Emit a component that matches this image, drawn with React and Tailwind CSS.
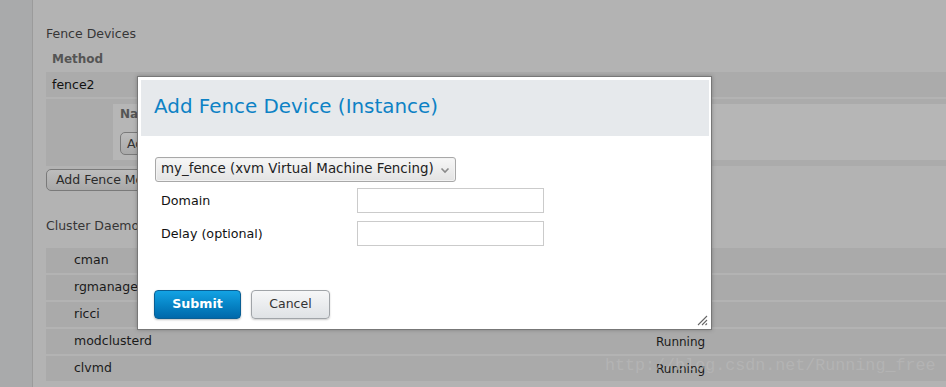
import React from "react";

const daemons = [
  { name: "cman", status: "" },
  { name: "rgmanager", status: "" },
  { name: "ricci", status: "" },
  { name: "modclusterd", status: "Running" },
  { name: "clvmd", status: "Running" },
];

export default function App() {
  return (
    <div
      className="relative flex w-[946px] h-[387px] overflow-hidden bg-[#b3b3b3] text-[#1a1a1a]"
      style={{ fontFamily: '"DejaVu Sans", Verdana, sans-serif' }}
    >
      <div className="w-[33px] shrink-0 bg-[#a9aaab] border-r border-[#9b9b9b]" />
      <div className="flex-1 pl-[13px] pt-[26px]">
        <div className="h-[16px] leading-[16px] text-[12.5px] text-[#363636]">Fence Devices</div>
        <div className="mt-[8px] h-[18px] leading-[18px] pl-[6px] text-[12px] font-bold text-[#555]">Method</div>
        <div className="mt-[4px] h-[25px] leading-[25px] pl-[6px] text-[12.5px] bg-[#ababab] text-[#111]">fence2</div>
        <div className="mt-[2px] bg-[#ababab] pt-[5px] pb-[6px] pl-[67px]">
          <div className="h-[56px] bg-[#b6b6b6] pl-[7px] pt-[2px]">
            <div className="h-[16px] leading-[16px] text-[12px] font-bold text-[#555]">Name</div>
            <div className="mt-[10px] h-[23px] w-[60px] rounded-[5px] border border-[#7a7a7a] bg-gradient-to-b from-[#bdbdbd] to-[#a9a9a9] pl-[6px] leading-[21px] text-[12.5px] text-[#333]">
              Add
            </div>
          </div>
        </div>
        <div className="mt-[3px] h-[22px] w-[150px] rounded-[5px] border border-[#7a7a7a] bg-gradient-to-b from-[#bdbdbd] to-[#a9a9a9] pl-[9px] leading-[20px] text-[12.5px] text-[#2b2b2b]">
          Add Fence Method
        </div>
        <div className="mt-[27px] h-[16px] leading-[16px] text-[12.5px] text-[#363636]">Cluster Daemons</div>
        <div className="mt-[14px] flex flex-col gap-[2px]">
          {daemons.map((d) => (
            <div key={d.name} className="flex h-[25px] items-center bg-[#aaaaaa] text-[12.5px] text-[#1a1a1a]">
              <div className="w-[610px] pl-[28px]">{d.name}</div>
              <div className="text-[12px]">{d.status}</div>
            </div>
          ))}
        </div>
      </div>

      {/* watermark */}
      <div
        className="pointer-events-none absolute left-[605px] top-[356px] text-[16.7px] leading-[20px] text-[#b8b8b8] opacity-70"
        style={{ fontFamily: '"Liberation Mono", monospace' }}
      >
        http://blog.csdn.net/Running_free
      </div>

      {/* modal */}
      <div className="absolute left-[137px] top-[76px] w-[575px] h-[254px] bg-white border border-[#777] pl-[3px] pr-[2px] pt-[3px] shadow-[0_0_4px_rgba(0,0,0,0.25)]">
        <div className="flex h-[56px] items-center bg-[#e6e9ec] pl-[13px] pb-[2px]">
          <span className="text-[19.9px] text-[#0d82c5]">Add Fence Device (Instance)</span>
        </div>
        <div className="pl-[14px]">
          <div className="mt-[21px] flex h-[25px] w-[301px] items-center justify-between rounded-[3px] border border-[#a8a8a8] bg-gradient-to-b from-[#f7f7f7] to-[#e3e3e3] pl-[5px] pr-[5px] shadow-[inset_0_0_0_1px_#f2f2f2]">
            <span className="text-[13.4px] text-[#222]">my_fence (xvm Virtual Machine Fencing)</span>
            <svg width="10" height="7" viewBox="0 0 10 7" className="mt-[1px]">
              <path d="M1.5 1.5 L5 5 L8.5 1.5" fill="none" stroke="#8a8a8a" strokeWidth="1.6" />
            </svg>
          </div>
          <div className="mt-[6px] flex h-[25px] items-center">
            <div className="w-[202px] pl-[6px] text-[12.7px] text-[#111]">Domain</div>
            <div className="h-[25px] w-[187px] border border-[#cbcbcb] bg-white" />
          </div>
          <div className="mt-[8px] flex h-[25px] items-center">
            <div className="w-[202px] pl-[6px] text-[12.7px] text-[#111]">Delay (optional)</div>
            <div className="h-[25px] w-[187px] border border-[#cbcbcb] bg-white" />
          </div>
          <div className="mt-[44px] flex gap-[10px] -ml-[1px]">
            <div className="flex h-[29px] w-[87px] items-center justify-center rounded-[4px] border border-[#0a5f94] bg-gradient-to-b from-[#13a3e4] to-[#0068aa] text-[12.6px] font-bold text-white shadow-[0_1px_2px_rgba(0,0,0,0.25)]">
              Submit
            </div>
            <div className="flex h-[29px] w-[79px] items-center justify-center rounded-[4px] border border-[#a0a4a8] bg-gradient-to-b from-[#f6f7f8] to-[#dfe2e5] text-[12.5px] text-[#333] shadow-[0_1px_2px_rgba(0,0,0,0.2)]">
              Cancel
            </div>
          </div>
        </div>
        <svg width="12" height="12" viewBox="0 0 12 12" className="absolute right-[3px] bottom-[3px]">
          <path d="M11 2 L2 11 M11 6 L6 11 M11 9.5 L9.5 11" stroke="#666" strokeWidth="1.1" fill="none" />
        </svg>
      </div>
    </div>
  );
}
